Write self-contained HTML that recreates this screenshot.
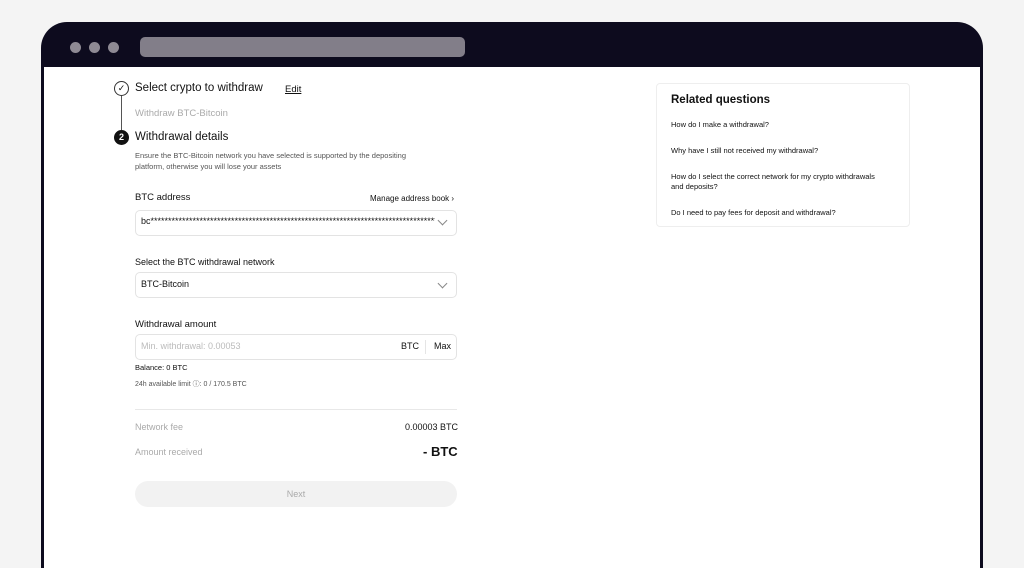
<!DOCTYPE html>
<html><head><style>
*{margin:0;padding:0;box-sizing:border-box}
html,body{width:1024px;height:568px;overflow:hidden}
body{background:#f4f4f4;font-family:"Liberation Sans",sans-serif;color:#111}
.wrap{position:relative;width:1024px;height:568px;overflow:hidden}
.frame{position:absolute;left:41px;top:22px;width:942px;height:546px;background:#0d0b1e;border-radius:26px 26px 0 0}
.dot{position:absolute;top:42px;width:11px;height:11px;border-radius:50%;background:#8e8a94}
.bar{position:absolute;left:140px;top:37px;width:325px;height:20px;border-radius:5px;background:#827e89}
.page{position:absolute;left:44px;top:67px;width:936px;height:501px;background:#fff}
.a{position:absolute;white-space:nowrap}
.box{position:absolute;left:135px;width:322px;border:1px solid #e3e3e3;border-radius:5px;background:#fff}
.chev{position:absolute;width:7px;height:7px;border-right:1px solid #888;border-bottom:1px solid #888;transform:rotate(45deg)}
</style></head><body><div class="wrap">
<div class="frame"></div>
<div class="dot" style="left:70px"></div><div class="dot" style="left:89px"></div><div class="dot" style="left:108px"></div>
<div class="bar"></div>
<div class="page"></div>

<div class="a" style="left:114px;top:81px;width:15px;height:15px;border:1px solid #333;border-radius:50%;font-size:9px;text-align:center;line-height:13px">✓</div>
<div class="a" style="left:121px;top:96px;width:1px;height:34px;background:#555"></div>
<div class="a" style="left:114px;top:130px;width:15px;height:15px;background:#111;border-radius:50%;color:#fff;font-size:9px;text-align:center;line-height:15px;font-weight:bold">2</div>
<div class="a" style="left:135px;top:82px;font-size:11.5px">Select crypto to withdraw</div>
<div class="a" style="left:285px;top:84px;font-size:9.5px;text-decoration:underline">Edit</div>
<div class="a" style="left:135px;top:108px;font-size:9.5px;color:#aaa">Withdraw BTC-Bitcoin</div>
<div class="a" style="left:135px;top:131px;font-size:11.5px">Withdrawal details</div>
<div class="a" style="left:135px;top:150px;font-size:7.5px;color:#555;line-height:11px">Ensure the BTC-Bitcoin network you have selected is supported by the depositing<br>platform, otherwise you will lose your assets</div>

<div class="a" style="left:135px;top:192px;font-size:9.5px">BTC address</div>
<div class="a" style="left:370px;top:194px;font-size:8px">Manage address book ›</div>
<div class="box" style="top:210px;height:26px"></div>
<div class="a" style="left:141px;top:216px;font-size:9px;width:294px;overflow:hidden">bc**********************************************************************************</div>
<div class="chev" style="left:439px;top:217px"></div>

<div class="a" style="left:135px;top:257px;font-size:9px">Select the BTC withdrawal network</div>
<div class="box" style="top:272px;height:26px"></div>
<div class="a" style="left:141px;top:279px;font-size:9px">BTC-Bitcoin</div>
<div class="chev" style="left:439px;top:280px"></div>

<div class="a" style="left:135px;top:319px;font-size:9.5px">Withdrawal amount</div>
<div class="box" style="top:334px;height:26px"></div>
<div class="a" style="left:141px;top:341px;font-size:9px;color:#bbb">Min. withdrawal: 0.00053</div>
<div class="a" style="left:401px;top:341px;font-size:9px">BTC</div>
<div class="a" style="left:425px;top:340px;width:1px;height:14px;background:#e5e5e5"></div>
<div class="a" style="left:434px;top:341px;font-size:9px">Max</div>
<div class="a" style="left:135px;top:363px;font-size:7.5px">Balance: 0 BTC</div>
<div class="a" style="left:135px;top:379px;font-size:7px;color:#555">24h available limit ⓘ: 0 / 170.5 BTC</div>
<div class="a" style="left:135px;top:409px;width:322px;height:1px;background:#e8e8e8"></div>
<div class="a" style="left:135px;top:422px;font-size:9px;color:#aaa">Network fee</div>
<div class="a" style="left:405px;top:422px;font-size:9px">0.00003 BTC</div>
<div class="a" style="left:135px;top:447px;font-size:9px;color:#aaa">Amount received</div>
<div class="a" style="left:423px;top:444px;font-size:13px;font-weight:bold">- BTC</div>
<div class="a" style="left:135px;top:481px;width:322px;height:26px;border-radius:13px;background:#f2f2f2;text-align:center;line-height:26px;font-size:9px;color:#aaa">Next</div>

<div class="a" style="left:656px;top:83px;width:254px;height:144px;border:1px solid #eee;border-radius:4px"></div>
<div class="a" style="left:671px;top:94px;font-size:11.5px;font-weight:bold">Related questions</div>
<div class="a" style="left:671px;top:120px;font-size:7.5px">How do I make a withdrawal?</div>
<div class="a" style="left:671px;top:146px;font-size:7.5px">Why have I still not received my withdrawal?</div>
<div class="a" style="left:671px;top:172px;font-size:7.5px;line-height:10px">How do I select the correct network for my crypto withdrawals<br>and deposits?</div>
<div class="a" style="left:671px;top:208px;font-size:7.5px">Do I need to pay fees for deposit and withdrawal?</div>
</div></body></html>
